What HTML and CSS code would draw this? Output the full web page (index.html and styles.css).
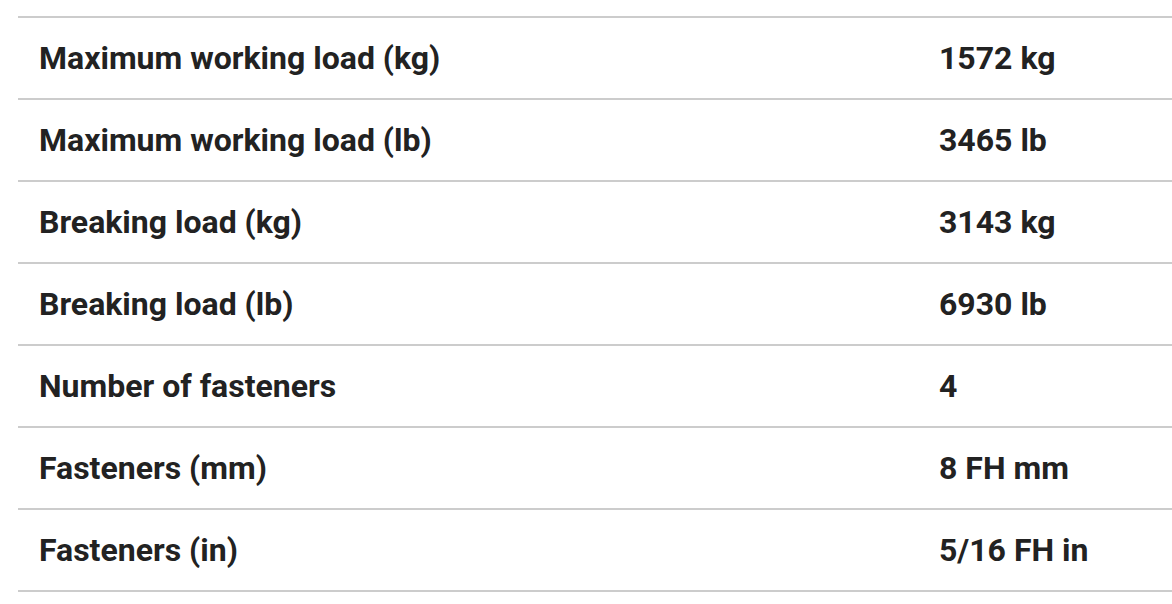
FILE: index.html
```html
<!DOCTYPE html>
<html>
<head>
<meta charset="utf-8">
<link rel="stylesheet" href="styles.css">
</head>
<body>
<div class="specs">
  <div class="row"><div class="label">Maximum working load (kg)</div><div class="value">1572 kg</div></div>
  <div class="row"><div class="label">Maximum working load (lb)</div><div class="value">3465 lb</div></div>
  <div class="row"><div class="label">Breaking load (kg)</div><div class="value">3143 kg</div></div>
  <div class="row"><div class="label">Breaking load (lb)</div><div class="value">6930 lb</div></div>
  <div class="row"><div class="label">Number of fasteners</div><div class="value">4</div></div>
  <div class="row"><div class="label">Fasteners (mm)</div><div class="value">8 FH mm</div></div>
  <div class="row"><div class="label">Fasteners (in)</div><div class="value">5/16 FH in</div></div>
</div>
</body>
</html>
```
FILE: styles.css
```css
html, body {
  margin: 0;
  padding: 0;
  background: #fff;
}
body {
  font-family: Roboto, "Liberation Sans", sans-serif;
  color: #222;
  overflow: hidden;
}
.specs {
  margin: 16px 0 0 18px;
  border-bottom: 2px solid #cccccc;
}
.row {
  display: flex;
  align-items: center;
  height: 80px;
  border-top: 2px solid #cccccc;
}
.label {
  width: 900px;
  padding-left: 21px;
  box-sizing: border-box;
  font-size: 32px;
  font-weight: 700;
}
.value {
  padding-left: 21px;
  font-size: 32px;
  font-weight: 700;
}
```
